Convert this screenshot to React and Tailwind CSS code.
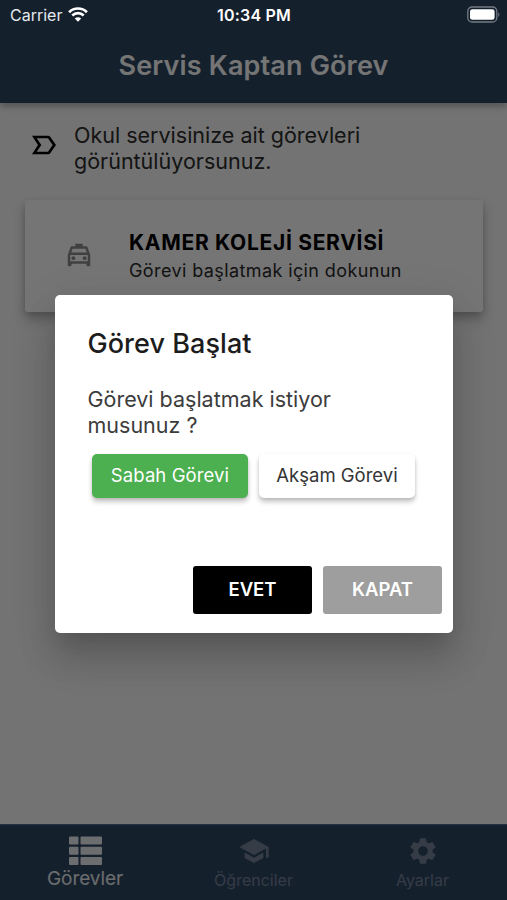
import { MdLabelImportantOutline, MdOutlineLocalTaxi, MdSchool, MdSettings } from "react-icons/md";

function StatusBar() {
  return (
    <div className="absolute inset-x-0 top-0 z-20 grid h-[30px] grid-cols-3 items-center pl-[10px] pr-[7px] text-[#e4e9ee]">
      <div className="flex items-center gap-[6px]">
        <span className="text-[16px] leading-none">Carrier</span>
        <svg className="-mt-[2px] h-[15px] w-[20px]" viewBox="0 0 20 15" fill="none" stroke="#ffffff" strokeWidth="2.7">
          <path d="M1.1 5.2a12.6 12.6 0 0 1 17.8 0" />
          <path d="M4.3 8.5a8.1 8.1 0 0 1 11.4 0" />
          <path d="M10 14.8 6.8 11.5a4.5 4.5 0 0 1 6.4 0z" fill="#ffffff" stroke="none" />
        </svg>
      </div>
      <span className="-ml-[2px] text-center text-[16px] font-semibold leading-none tracking-[0.2px] text-white">10:34 PM</span>
      <svg className="-mt-[2px] h-[17px] w-[33px] justify-self-end" viewBox="0 0 33 17">
        <rect x="0.800" y="1" width="29" height="15" rx="4.3" fill="none" stroke="#747b84" strokeWidth="1.3" />
        <rect x="3" y="3.200" width="24.600" height="10.600" rx="2.4" fill="#ffffff" />
        <path d="M31.300 6.300v4.600c1.500-.8 1.500-3.800 0-4.600z" fill="#747b84" />
      </svg>
    </div>
  );
}

function TaskCard() {
  return (
    <div className="ml-[25px] mr-6 mt-[26px] flex h-[112px] items-center rounded-[3px] bg-white pl-[39px] shadow-[0_7px_12px_rgba(0,0,0,0.25),0_2px_6px_rgba(0,0,0,0.1)]">
      <MdOutlineLocalTaxi className="-mt-[2px] size-[30px] text-[#8c8c8c]" />
      <div className="ml-[35px]">
        <h2 className="text-[21px] font-bold leading-[26px] tracking-[0.7px] text-black">KAMER KOLEJİ SERVİSİ</h2>
        <p className="mt-[3px] text-[18px] leading-6 tracking-[0.4px] text-[#2c2c2c]">Görevi başlatmak için dokunun</p>
      </div>
    </div>
  );
}

function BottomNav() {
  return (
    <nav className="grid h-[76px] grid-cols-3 border-t border-[#4e6c90] bg-[#2e4663]">
      <div className="flex flex-col items-center pl-px pt-[11px] text-white/90">
        <svg className="h-[29px] w-[33px]" viewBox="0 0 33 29" fill="currentColor">
          <rect x="0" y="0.500" width="9.500" height="8" rx="1" />
          <rect x="11.500" y="0.500" width="21.500" height="8" rx="1" />
          <rect x="0" y="10.700" width="9.500" height="8" rx="1" />
          <rect x="11.500" y="10.700" width="21.500" height="8" rx="1" />
          <rect x="0" y="20.900" width="9.500" height="8" rx="1" />
          <rect x="11.500" y="20.900" width="21.500" height="8" rx="1" />
        </svg>
        <span className="mt-[2px] text-[19px] leading-6 tracking-[-0.1px]">Görevler</span>
      </div>
      <div className="flex flex-col items-center pt-[10px] text-[#75839a]">
        <MdSchool className="size-[32px]" />
        <span className="mt-px text-[16px] leading-6">Öğrenciler</span>
      </div>
      <div className="flex flex-col items-center pt-[10px] text-[#75839a]">
        <MdSettings className="size-[32px]" />
        <span className="mt-px text-[16px] leading-6">Ayarlar</span>
      </div>
    </nav>
  );
}

function StartDialog() {
  return (
    <div className="flex h-[338px] w-[398px] flex-col rounded-[5px] bg-white shadow-[0_13px_18px_-8px_rgba(0,0,0,0.12),0_27px_36px_2px_rgba(0,0,0,0.14),0_11px_44px_8px_rgba(0,0,0,0.07)]">
      <div className="px-[33px] pt-[33px]">
        <h1 className="text-[27px] font-medium leading-8 tracking-[0.05px] text-[#1c1c1c]">Görev Başlat</h1>
        <p className="mt-[26px] text-[21.500px] leading-[26px] text-[#3c3c3c]">
          Görevi başlatmak istiyor
          <br />
          musunuz ?
        </p>
      </div>
      <div className="mt-4 flex gap-[11px] pl-[37.500px] text-[18.500px]">
        <button className="h-[44px] w-[156px] rounded-[5px] bg-[#4caf50] tracking-[0.1px] text-white shadow-[0_4px_5px_rgba(0,0,0,0.22),0_1px_3px_rgba(0,0,0,0.1)]">
          Sabah Görevi
        </button>
        <button className="h-[44px] w-[156px] rounded-[5px] bg-white text-[#343434] shadow-[0_4px_5px_rgba(0,0,0,0.22),0_1px_3px_rgba(0,0,0,0.1)]">
          Akşam Görevi
        </button>
      </div>
      <div className="mb-[19px] mt-auto flex justify-end gap-[11px] pr-[10.500px] text-[18.500px] font-semibold text-white">
        <button className="h-[48px] w-[119px] rounded-[3px] bg-black">EVET</button>
        <button className="h-[48px] w-[119px] rounded-[3px] bg-[#9e9e9e]">KAPAT</button>
      </div>
    </div>
  );
}

export default function App() {
  return (
    <div className="relative flex h-[900px] w-[507px] flex-col overflow-hidden bg-[#fafafa] font-[Inter,sans-serif]">
      <StatusBar />
      <header className="z-0 h-[103px] bg-[#2e4663] pt-[50px] text-center shadow-[0_4px_6px_rgba(0,0,0,0.25)]">
        <h1 className="text-[27px] font-semibold leading-8 tracking-[0.15px] text-white">Servis Kaptan Görev</h1>
      </header>
      <main className="flex-1">
        <div className="flex items-center pl-[28px] pt-[19px]">
          <MdLabelImportantOutline className="-mt-[7px] size-[32px] text-black" />
          <p className="ml-[14px] text-[21.500px] leading-[26px] text-[#2c2c2c]">
            Okul servisinize ait görevleri
            <br />
            görüntülüyorsunuz.
          </p>
        </div>
        <TaskCard />
      </main>
      <BottomNav />

      {/* Dialog overlay */}
      <div className="absolute inset-0 z-10 flex items-center justify-center bg-black/54 pt-[28px]">
        <StartDialog />
      </div>
    </div>
  );
}
